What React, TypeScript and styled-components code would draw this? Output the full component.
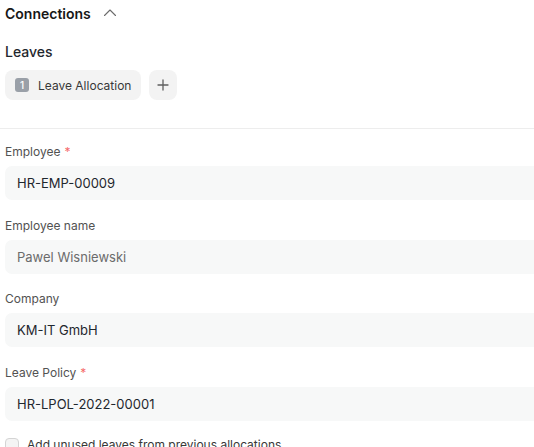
import React from "react";
import styled, { createGlobalStyle } from "styled-components";

const Global = createGlobalStyle`
  html, body { margin: 0; padding: 0; background: #fff; overflow: hidden; }
  body { font-family: Inter, "Noto Sans", sans-serif; color: #1f272e; -webkit-font-smoothing: antialiased; }
`;

const Page = styled.div`
  width: 545px;
  padding: 0 0 0 5px;
  box-sizing: border-box;
`;

const SectionHead = styled.div`
  display: flex;
  align-items: center;
  gap: 11px;
  height: 26px;
  font-size: 14px;
  font-weight: 600;
  color: #171717;
`;

const Chevron = styled.svg`
  width: 16px;
  height: 16px;
`;

const GroupTitle = styled.div`
  margin-top: 16px;
  font-size: 14px;
  font-weight: 500;
  color: #1f272e;
  line-height: 20px;
`;

const LinkRow = styled.div`
  display: flex;
  gap: 8px;
  margin-top: 8px;
`;

const Pill = styled.div`
  display: flex;
  align-items: center;
  gap: 9px;
  height: 30px;
  padding: 0 10px;
  background: #f3f3f3;
  border-radius: 8px;
  font-size: 12px;
  color: #383838;
`;

const Count = styled.span`
  display: inline-flex;
  align-items: center;
  justify-content: center;
  width: 14px;
  height: 14px;
  border-radius: 3px;
  background: #9aa0a8;
  color: #fff;
  font-size: 10px;
  font-weight: 500;
`;

const IconButton = styled.div`
  display: flex;
  align-items: center;
  justify-content: center;
  width: 28px;
  height: 30px;
  background: #f3f3f3;
  border-radius: 8px;
`;

const Divider = styled.div`
  height: 1px;
  background: #ededed;
  margin: 28px 0 0 -5px;
`;

const Form = styled.div`
  display: flex;
  flex-direction: column;
  gap: 17.67px;
  padding-top: 15px;
`;

const Field = styled.div`
  display: flex;
  flex-direction: column;
  gap: 6px;
`;

const Label = styled.label`
  font-size: 12px;
  line-height: 16px;
  color: #525252;
`;

const Req = styled.span`
  color: #f56b6b;
  margin-left: 4px;
`;

const Input = styled.div<{ $muted?: boolean }>`
  height: 34px;
  display: flex;
  align-items: center;
  padding: 0 12px;
  background: #f7f8f8;
  border-radius: 7px;
  font-size: 13px;
  color: ${(p) => (p.$muted ? "#6b6b6b" : "#1f272e")};
`;

const CheckRow = styled.div`
  display: flex;
  align-items: center;
  gap: 8px;
  margin-top: 16px;
  font-size: 12px;
  line-height: 16px;
  color: #383838;
`;

const Box = styled.span`
  width: 14px;
  height: 14px;
  border: 1px solid #d4d4d4;
  background: #f4f4f4;
  border-radius: 4px;
  box-sizing: border-box;
`;

const fields = [
  { label: "Employee", value: "HR-EMP-00009", req: true },
  { label: "Employee name", value: "Pawel Wisniewski", muted: true },
  { label: "Company", value: "KM-IT GmbH" },
  { label: "Leave Policy", value: "HR-LPOL-2022-00001", req: true },
];

export default function App() {
  return (
    <>
      <Global />
      <Page>
        <SectionHead>
          Connections
          <Chevron viewBox="0 0 16 16" fill="none" stroke="#6b6b6b" strokeWidth="1.1" strokeLinecap="round" strokeLinejoin="round">
            <path d="M2.5 10.5 L8 5 L13.5 10.5" />
          </Chevron>
        </SectionHead>
        <GroupTitle>Leaves</GroupTitle>
        <LinkRow>
          <Pill>
            <Count>1</Count>
            Leave Allocation
          </Pill>
          <IconButton>
            <svg width="14" height="14" viewBox="0 0 14 14" fill="none" stroke="#5f5f5f" strokeWidth="1.3" strokeLinecap="round">
              <path d="M7 2v10M2 7h10" />
            </svg>
          </IconButton>
        </LinkRow>
        <Divider />
        <Form>
          {fields.map((f) => (
            <Field key={f.label}>
              <Label>
                {f.label}
                {f.req && <Req>*</Req>}
              </Label>
              <Input $muted={f.muted}>{f.value}</Input>
            </Field>
          ))}
        </Form>
        <CheckRow>
          <Box />
          Add unused leaves from previous allocations
        </CheckRow>
      </Page>
    </>
  );
}
